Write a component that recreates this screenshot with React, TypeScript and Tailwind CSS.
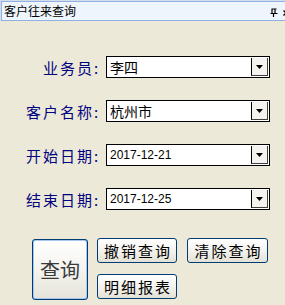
import React from "react";

const cjk = '"Noto Sans CJK SC", "Noto Sans", sans-serif';

function Arrow() {
  return (
    <svg width="7" height="4" viewBox="0 0 7 4">
      <path d="M0 0 H7 L3.5 4 Z" fill="#000" />
    </svg>
  );
}

function Select({ value, mono }: { value: string; mono?: boolean }) {
  return (
    <div className="w-[164px] h-[22px] border border-black bg-white flex items-stretch">
      <div
        className="flex-1 flex items-center pl-[3px] text-black"
        style={{ fontFamily: mono ? '"Liberation Sans", Arial, sans-serif' : cjk }}
      >
        <span className={mono ? "text-[12px]" : "text-[14px]"}>{value}</span>
      </div>
      <div className="w-[17px] my-[1px] mr-[1px] border-l border-black border-r border-b border-r-[#404040] border-b-[#404040] bg-[#F4F3EE] flex items-center justify-center">
        <Arrow />
      </div>
    </div>
  );
}

function Row({ label, value, mono }: { label: string; value: string; mono?: boolean }) {
  const chars = Array.from(label);
  return (
    <div className="flex items-center h-[22px]">
      <div
        className="w-[106px] flex justify-end items-center text-[15px] text-[#000080] leading-none"
        style={{ fontFamily: cjk }}
      >
        {chars.map((c, i) => (
          <span key={i} className="w-[17px] text-center">
            {c}
          </span>
        ))}
        <span className="w-[13px] text-left pl-[1px]">:</span>
      </div>
      <Select value={value} mono={mono} />
    </div>
  );
}

function Btn({ children, className }: { children: React.ReactNode; className?: string }) {
  return (
    <div
      className={
        "border border-[#003C74] rounded-[3px] bg-gradient-to-b from-[#FFFFFF] via-[#F4F3EE] to-[#E3E1D6] flex items-center justify-center text-black text-[15px] tracking-[2px] leading-none " +
        (className || "")
      }
      style={{ fontFamily: cjk }}
    >
      <span className="pl-[2px]">{children}</span>
    </div>
  );
}

export default function App() {
  return (
    <div className="w-[285px] h-[305px] bg-[#ECE9D8] overflow-hidden flex flex-col">
      <div className="h-[21px] bg-[#D6DDE8] pt-[1px] pl-[1px]">
        <div className="h-[20px] w-[300px] border border-[#8DB2E3] bg-[#EEF5FD] flex items-center relative">
          <span className="pl-[2px] text-[12px] text-black leading-none" style={{ fontFamily: cjk }}>
            客户往来查询
          </span>
          <svg className="absolute left-[268px] top-[6px]" width="8" height="9" viewBox="0 0 8 9">
            <path d="M1.5 1 H6.5 M2 1 V5 M5 1 V5 M0.5 5.5 H7.5 M3.5 5.5 V9" stroke="#000" strokeWidth="1.2" fill="none" />
          </svg>
          <svg className="absolute left-[281px] top-[8px]" width="6" height="6" viewBox="0 0 6 6">
            <path d="M0.5 0.5 L5.5 5.5 M5.5 0.5 L0.5 5.5" stroke="#000" strokeWidth="1.3" />
          </svg>
        </div>
      </div>
      <div className="pt-[35px] flex flex-col gap-[22px]">
        <Row label="业务员" value="李四" />
        <Row label="客户名称" value="杭州市" />
        <Row label="开始日期" value="2017-12-21" mono />
        <Row label="结束日期" value="2017-12-25" mono />
      </div>
      <div className="mt-[28px] ml-[32px] flex gap-[9px] items-start">
        <div className="mt-[1px] w-[56px] h-[61px] rounded-[3px] border border-[#003C74] p-[1px] bg-[#A8C6F0]">
          <div
            className="w-full h-full rounded-[2px] bg-gradient-to-b from-[#FFFFFF] via-[#F4F3EE] to-[#E6E4DA] flex items-center justify-center text-[20px] text-[#3A3A3A] leading-none"
            style={{ fontFamily: cjk }}
          >
            查询
          </div>
        </div>
        <div className="flex flex-col gap-[11px]">
          <div className="flex gap-[10px]">
            <Btn className="w-[80px] h-[25px]">撤销查询</Btn>
            <Btn className="w-[81px] h-[25px]">清除查询</Btn>
          </div>
          <Btn className="w-[80px] h-[25px]">明细报表</Btn>
        </div>
      </div>
    </div>
  );
}
